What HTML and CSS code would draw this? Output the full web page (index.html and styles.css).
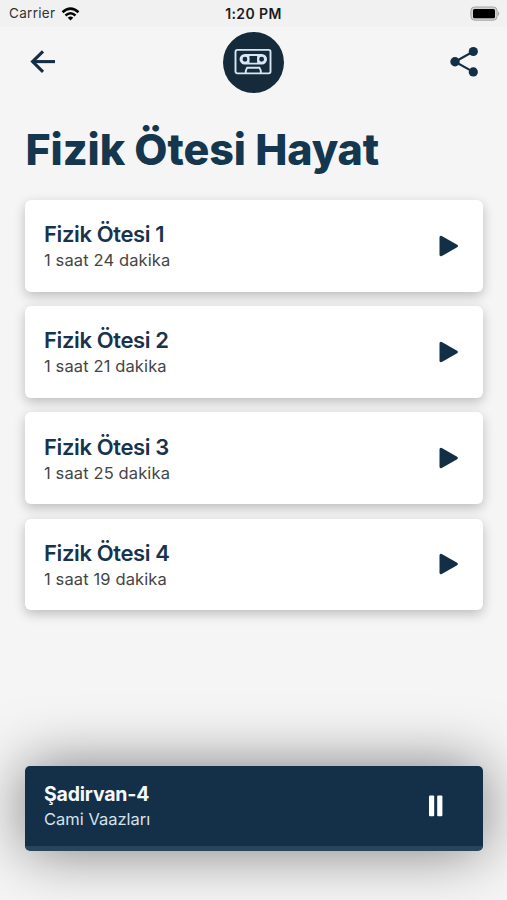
FILE: index.html
```html
<!DOCTYPE html>
<html lang="tr">
<head>
<meta charset="utf-8">
<title>Fizik Ötesi Hayat</title>
<link rel="stylesheet" href="styles.css">
</head>
<body>
<div class="screen">
  <div class="status">
    <div class="carrier"><span>Carrier</span>
      <svg width="19" height="14" viewBox="0 0 18 14" fill="none" stroke="#050505" stroke-width="2.5"><path d="M1 5.2Q9-2 17 5.2"/><path d="M4 8.5Q9 4 14 8.5"/><path d="M6.2 10.7Q9 8.3 11.8 10.7L9 13.5Z" fill="#050505" stroke="none"/></svg>
    </div>
    <span class="time">1:20 PM</span>
    <svg class="battery" width="32" height="16" viewBox="0 0 32 16"><rect x="1.9" y="1" width="26.2" height="13.2" rx="3.7" fill="#d2d2d2" stroke="#a5a5a5"/><path d="M29 5.2q2.6 2.4 0 4.8z" fill="#aaa"/><rect x="4" y="3" width="22" height="9.3" rx="1.5" fill="#000"/></svg>
  </div>
  <header class="bar">
    <svg width="30" height="30" viewBox="0 0 30 30" fill="none" stroke="#132f46" stroke-width="3.1"><path d="M29 14.6H6"/><path d="M17 4.4L6.6 14.6L17 24.8"/></svg>
    <div class="logo">
      <svg width="38" height="28" viewBox="0 0 38 28" fill="none" stroke="#d8e7f3" stroke-width="1.9"><rect x="1.5" y="1.9" width="35" height="23.5" rx="1.8"/><rect x="6.5" y="7" width="25.6" height="8.6" rx="4.3"/><path d="M14.5 7.4v7.8M24.1 7.4v7.8M11.8 25v-2.3l1.4-3h12.2l1.4 3V25"/><circle cx="11" cy="11.3" r="3.4"/><circle cx="27.6" cy="11.3" r="3.4"/></svg>
    </div>
    <svg width="30" height="32" viewBox="0 0 30 32" fill="#132f46"><path d="M23.3 5.5L5 15.7L23.3 25.9" fill="none" stroke="#132f46" stroke-width="2.2"/><circle cx="23.3" cy="5.5" r="4.6"/><circle cx="5" cy="15.7" r="4.7"/><circle cx="23.3" cy="25.9" r="4.6"/></svg>
  </header>
  <h1><span>Fizik Ötesi Hayat</span></h1>
  <main class="list">
    <article class="card"><div><h2>Fizik Ötesi 1</h2><p>1 saat 24 dakika</p></div><svg class="play" width="22" height="24" viewBox="0 0 22 24"><path d="M3 3.2L18.4 12L3 20.8Z"/></svg></article>
    <article class="card"><div><h2>Fizik Ötesi 2</h2><p>1 saat 21 dakika</p></div><svg class="play" width="22" height="24" viewBox="0 0 22 24"><path d="M3 3.2L18.4 12L3 20.8Z"/></svg></article>
    <article class="card"><div><h2>Fizik Ötesi 3</h2><p>1 saat 25 dakika</p></div><svg class="play" width="22" height="24" viewBox="0 0 22 24"><path d="M3 3.2L18.4 12L3 20.8Z"/></svg></article>
    <article class="card"><div><h2>Fizik Ötesi 4</h2><p>1 saat 19 dakika</p></div><svg class="play" width="22" height="24" viewBox="0 0 22 24"><path d="M3 3.2L18.4 12L3 20.8Z"/></svg></article>
  </main>
  <footer class="player">
    <div><h3>Şadirvan-4</h3><p>Cami Vaazları</p></div>
    <svg width="16" height="22" viewBox="0 0 16 22" fill="#fff"><rect x="1" y=".5" width="5.2" height="20.8" rx="1"/><rect x="9.2" y=".5" width="5.2" height="20.8" rx="1"/></svg>
  </footer>
</div>
</body>
</html>
```
FILE: styles.css
```css
* { box-sizing: border-box; }
body { margin: 0; background: #f5f5f5; font-family: Inter, "Liberation Sans", sans-serif; }
h1, h2, h3, p { margin: 0; }
svg { display: block; flex: none; }
.screen { height: 900px; display: flex; flex-direction: column; overflow: hidden; }
.status { height: 27px; background: #f1f1f1; display: grid; grid-template-columns: 1fr auto 1fr; align-items: center; padding: 0 6px 0 9px; font-size: 13.5px; line-height: 27px; color: #333; }
.carrier { display: flex; align-items: center; gap: 6px; }
.carrier span { letter-spacing: .3px; }
.time { font-size: 14px; font-weight: 600; letter-spacing: .4px; color: #1b1b1b; margin-right: 3px; }
.battery { justify-self: end; }
.bar { height: 70px; padding: 0 27px 0 26px; display: flex; align-items: center; justify-content: space-between; }
.logo { width: 61px; height: 61px; border-radius: 50%; background: #152b3c; display: flex; align-items: center; justify-content: center; }
h1 { height: 103px; padding: 25px 0 0 25.5px; font-size: 43px; line-height: 54px; font-weight: 800; letter-spacing: -.09px; color: #14364e; white-space: nowrap; }
.list { display: flex; flex-direction: column; gap: 14.7px; padding: 0 24.5px 0 25px; }
.card { height: 91.5px; padding: 2px 23px 0 19px; display: flex; align-items: center; justify-content: space-between; background: #fff; border-radius: 6px; box-shadow: 0 4px 12px rgba(0,0,0,.23); }
h2 { font-size: 22px; line-height: 27px; font-weight: 600; color: #17334d; letter-spacing: -.38px; }
.card p { font-size: 16.5px; line-height: 24px; letter-spacing: .12px; color: #454545; }
.play { margin-top: -2px; fill: #132f46; stroke: #132f46; stroke-width: 3; stroke-linejoin: round; }
.player { margin: auto 24.5px 49px 25px; height: 85.5px; padding: 1px 39px 0 19px; display: flex; align-items: center; justify-content: space-between; background: #133048; border-bottom: 5px solid #29455c; border-radius: 5px; box-shadow: 0 0 60px rgba(0,0,0,.5); color: #fff; }
h3 { font-size: 19.5px; line-height: 26px; font-weight: 700; letter-spacing: -.2px; color: #f4f9ff; }
.player > div { padding-top: 1px; }
.player p { font-size: 16.5px; line-height: 25px; color: #d5e2ed; }
```
